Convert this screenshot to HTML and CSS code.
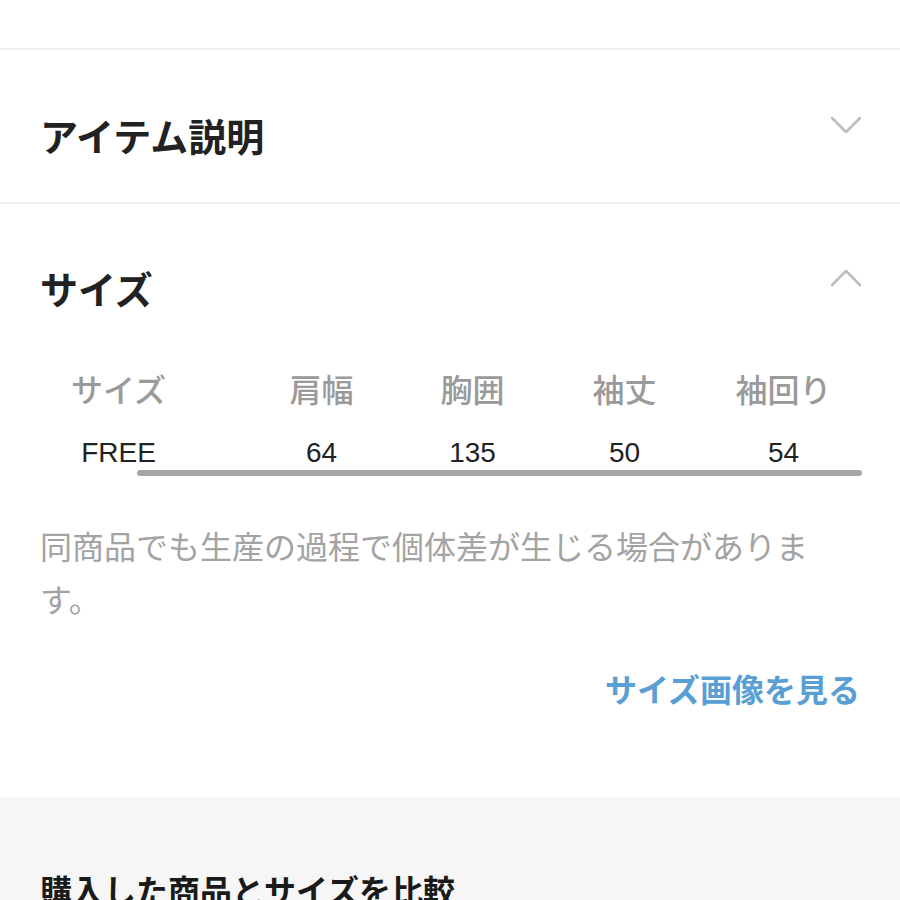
FILE: index.html
```html
<!DOCTYPE html>
<html lang="ja">
<head>
    <meta charset="UTF-8">
    <meta name="viewport" content="width=device-width, initial-scale=1.0">
    <title>サイズ</title>
    <link rel="stylesheet" href="styles.css">
</head>
<body>

<div class="top-space"></div>

<section class="panel">
    <div class="panel-head">
        <h2>アイテム説明</h2>
        <svg class="chevron" width="32" height="18" viewBox="0 0 32 18">
            <polyline points="2,2 16,16 30,2" />
        </svg>
    </div>
</section>

<section class="panel open">
    <div class="panel-head">
        <h2>サイズ</h2>
        <svg class="chevron" width="32" height="18" viewBox="0 0 32 18">
            <polyline points="2,16 16,2 30,16" />
        </svg>
    </div>

    <div class="size-grid">
        <div class="th">サイズ</div>
        <div class="th">肩幅</div>
        <div class="th">胸囲</div>
        <div class="th">袖丈</div>
        <div class="th">袖回り</div>
        <div class="td">FREE</div>
        <div class="td">64</div>
        <div class="td">135</div>
        <div class="td">50</div>
        <div class="td">54</div>
    </div>
    <div class="scroll-track">
        <div class="scroll-thumb"></div>
    </div>

    <p class="note">同商品でも生産の過程で個体差が生じる場合があります。</p>

    <div class="link-row">
        <a href="#" class="size-link">サイズ画像を見る</a>
    </div>
</section>

<section class="compare">
    <h3>購入した商品とサイズを比較</h3>
</section>

</body>
</html>
```

FILE: styles.css
```css
body {
    margin: 0;
    font-family: "Noto Sans CJK JP", "Noto Sans", sans-serif;
    background-color: #ffffff;
    color: #222222;
}
.top-space {
    height: 48px;
    border-bottom: 2px solid #f0f0f0;
}
.panel {
    padding: 0 40px;
}
.panel + .panel {
    border-top: 2px solid #f0f0f0;
}
.panel-head {
    display: flex;
    justify-content: space-between;
    align-items: flex-start;
    padding-top: 62px;
    padding-bottom: 44px;
}
.panel.open .panel-head {
    padding-top: 61px;
    padding-bottom: 54px;
}
h2 {
    margin: 0;
    font-size: 38px;
    line-height: 46px;
    font-weight: 700;
    color: #222222;
}
.chevron {
    margin-top: 4px;
    margin-right: -2px;
}
.chevron polyline {
    fill: none;
    stroke: #bcbcbc;
    stroke-width: 2.5;
    stroke-linecap: round;
    stroke-linejoin: round;
}
.size-grid {
    display: grid;
    grid-template-columns: 255px 151px 151px 153px 165px;
    row-gap: 26px;
    margin-left: -49px;
    width: 875px;
}
.th, .td {
    text-align: center;
    white-space: nowrap;
}
.th {
    font-size: 32px;
    line-height: 46px;
    font-weight: 500;
    color: #9a9a9a;
}
.td {
    font-family: "Liberation Sans", Arial, sans-serif;
    font-size: 28px;
    line-height: 32px;
    color: #222222;
}
.scroll-track {
    margin-top: 1px;
    height: 6px;
}
.scroll-thumb {
    margin-left: 97px;
    width: 725px;
    height: 6px;
    border-radius: 3px;
    background-color: #a6a6a6;
}
.note {
    margin: 43px 0 0;
    font-size: 32px;
    line-height: 53px;
    color: #a3a3a3;
    padding-right: 40px;
}
.link-row {
    display: flex;
    justify-content: flex-end;
    margin-top: 43px;
    padding-bottom: 89px;
}
.size-link {
    font-size: 32px;
    line-height: 40px;
    font-weight: 700;
    color: #5a9fd4;
    text-decoration: none;
}
.compare {
    background-color: #f6f6f6;
    padding: 72px 40px 40px;
}
h3 {
    margin: 0;
    font-size: 32px;
    line-height: 40px;
    font-weight: 700;
    color: #1a1a1a;
}
```
